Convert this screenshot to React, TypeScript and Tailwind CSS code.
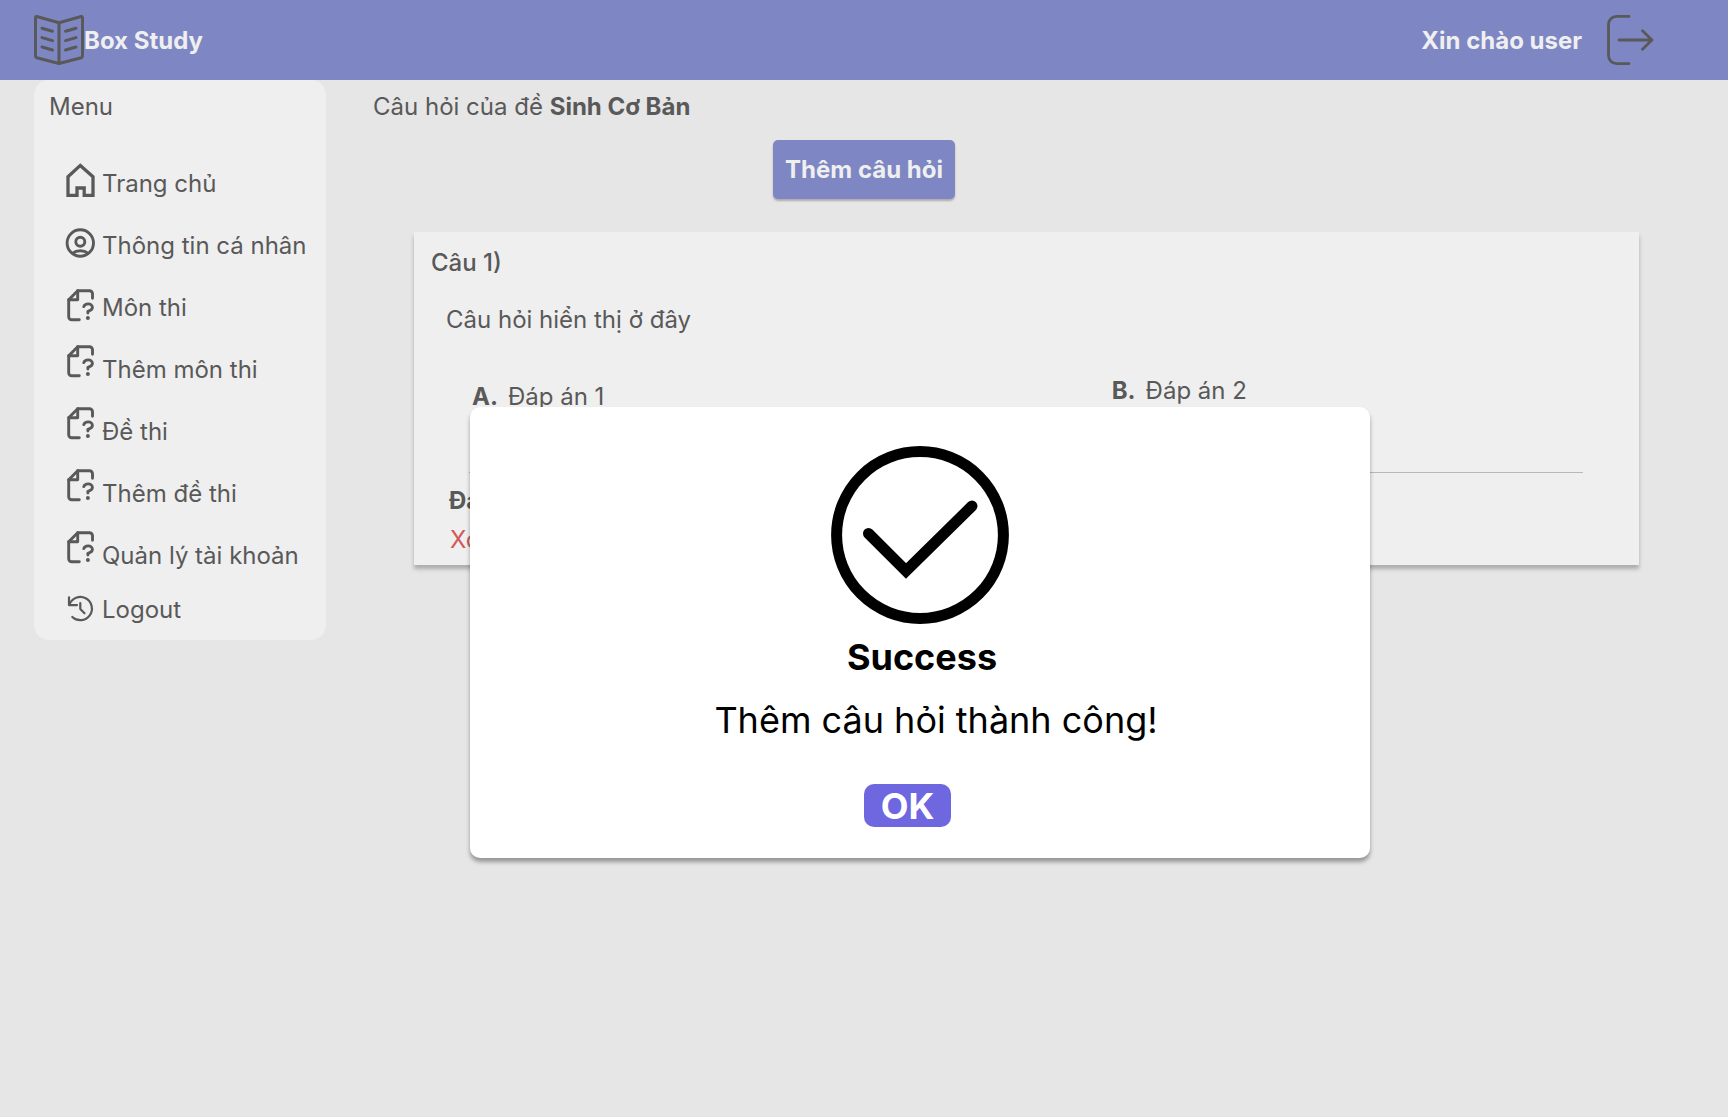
import type { ReactNode } from "react";

type IconProps = { children: ReactNode; width?: number; className?: string };

function MenuIcon({ children, width = 2.9, className = "" }: IconProps) {
  return (
    <svg
      viewBox="0 0 36 36"
      className={`h-9 w-9 ${className}`}
      fill="none"
      stroke="currentColor"
      strokeWidth={width}
      aria-hidden="true"
    >
      {children}
    </svg>
  );
}

const HomeIcon = () => (
  <MenuIcon width={3.3}>
    <path d="M6 14.7 18.3 3.4 31 14.7V33.3H22.2V26H15V33.3H6Z" />
  </MenuIcon>
);

const UserIcon = () => (
  <MenuIcon width={2.9}>
    <circle cx="18.3" cy="18" r="13.2" />
    <circle cx="18.3" cy="16.7" r="4.5" />
    <path d="M10.3 28.3C12.6 26.6 15.3 25.8 18.3 25.8s5.7.8 8 2.5" />
  </MenuIcon>
);

const QuestionFileIcon = () => (
  <MenuIcon>
    <g strokeLinecap="round" strokeLinejoin="round">
      <path d="M17.3 32.8H9.7a3 3 0 0 1-3-3V12.7l9-9h11.8a3 3 0 0 1 3 3v4.6" />
      <path d="M6.7 12.7h9v-9" />
      <path d="M21.8 19.6c.6-1.8 2.3-2.7 4.3-2.7 2.4 0 4.3 1.4 4.3 3.5 0 2.5-2.4 3.1-4.5 3.9V26" />
    </g>
    <circle cx="25.9" cy="31" r="2" fill="currentColor" stroke="none" />
  </MenuIcon>
);

const HistoryIcon = () => (
  <MenuIcon width={2.2}>
    <g strokeLinecap="round" strokeLinejoin="round">
      <path d="M7 6.3v7.8h8" />
      <path d="M7.4 13.6A11.6 11.6 0 1 1 10.3 26" />
      <path d="M18.3 12v6l4.2 4.3" />
    </g>
  </MenuIcon>
);

const items = [
  { label: "Trang chủ", icon: <HomeIcon />, row: "h-[62px]", lift: "pb-1.5" },
  { label: "Thông tin cá nhân", icon: <UserIcon />, row: "h-[62px]", lift: "pb-1" },
  { label: "Môn thi", icon: <QuestionFileIcon />, row: "h-[62px]", lift: "pb-1" },
  { label: "Thêm môn thi", icon: <QuestionFileIcon />, row: "h-[62px]", lift: "pb-4" },
  { label: "Đề thi", icon: <QuestionFileIcon />, row: "h-[62px]", lift: "pb-4" },
  { label: "Thêm đề thi", icon: <QuestionFileIcon />, row: "h-[62px]", lift: "pb-4" },
  { label: "Quản lý tài khoản", icon: <QuestionFileIcon />, row: "h-[62px]", lift: "pb-4" },
  { label: "Logout", icon: <HistoryIcon />, row: "h-[46px]", lift: "" },
];

function Header() {
  return (
    <header className="flex h-20 items-center justify-between bg-[#7e87c3] pr-[73px] pl-[34px] text-[#efefef]">
      <a href="#home" className="flex items-center font-bold">
        <svg viewBox="0 0 50 50" className="h-[50px] w-[50px] text-[#595959]" fill="none" stroke="currentColor" strokeWidth="3" strokeLinecap="round" strokeLinejoin="round" aria-hidden="true">
          <path d="M25 7.8 2.8 1.5Q1.5 1.3 1.5 2.8V41q0 1.3 1.3 1.7L25 48.5l22.2-5.8q1.3-.4 1.3-1.7V2.8q0-1.5-1.3-1.3ZV48.5" />
          <path d="m8 13.2 10.5 3M8 22.6l10.5 3M8 32l10.5 3M42 13.2l-10.5 3M42 22.6l-10.5 3M42 32l-10.5 3" />
        </svg>
        <span>Box Study</span>
      </a>
      <div className="flex items-center gap-[23px]">
        <span className="font-bold">Xin chào user</span>
        <button type="button" aria-label="Đăng xuất" className="text-[#595959]">
          <svg viewBox="0 0 50 50" className="h-[50px] w-[50px]" fill="none" stroke="currentColor" strokeWidth="2.8" strokeLinecap="round" strokeLinejoin="round" aria-hidden="true">
            <path d="M24 1.4H11.5a8 8 0 0 0-8 8v31.2a8 8 0 0 0 8 8H24" />
            <path d="M14 25h33M37.5 15.7 47 25l-9.5 9.3" />
          </svg>
        </button>
      </div>
    </header>
  );
}

function Sidebar() {
  return (
    <aside className="w-[292px] shrink-0 rounded-[15px] bg-[#efefef] pt-3 pb-2">
      <h2 className="pl-[15px]">Menu</h2>
      <nav aria-label="Menu" className="pt-[31px]">
        <ul>
          {items.map((item) => (
            <li key={item.label}>
              <a href="#menu" className={`flex items-center gap-1 pl-7 ${item.row}`}>
                <span className={item.lift}>{item.icon}</span>
                <span>{item.label}</span>
              </a>
            </li>
          ))}
        </ul>
      </nav>
    </aside>
  );
}

function QuestionCard() {
  return (
    <article className="mt-[33px] mr-[89px] ml-[41px] bg-[#efefef] pt-4 pb-[11px] shadow-[0_4px_4px_rgba(0,0,0,0.25)]">
      <h3 className="pl-[17px] font-medium">Câu 1)</h3>
      <p className="pt-7 pl-8">Câu hỏi hiển thị ở đây</p>
      <div className="mr-14 ml-[55px] border-b border-[#b8b8b8] pt-[42px] pb-[61px]">
        <div className="grid h-[35px] grid-cols-[15fr_11fr]">
          <p className="flex gap-[10px] self-end pl-[3px]">
            <b>A.</b>
            <span>Đáp án 1</span>
          </p>
          <p className="flex gap-[10px]">
            <b>B.</b>
            <span>Đáp án 2</span>
          </p>
        </div>
      </div>
      <p className="pt-[13px] pl-[35px] font-bold">Đáp án</p>
      <button type="button" className="mt-[10px] ml-9 block text-[#d05a5a]">Xoá</button>
    </article>
  );
}

function SuccessDialog() {
  return (
    <div className="absolute inset-0 flex items-start justify-center pt-[407px] pl-28">
      <div
        role="dialog"
        aria-modal="true"
        aria-labelledby="dialog-title"
        className="flex w-[900px] max-w-full flex-col items-center rounded-[10px] bg-white pt-[39px] pb-[30px] text-4xl leading-[44px] text-black shadow-[0_4px_4px_rgba(0,0,0,0.35)]"
      >
        <svg viewBox="0 0 178 178" className="h-[178px] w-[178px]" fill="none" stroke="currentColor" strokeWidth="11" aria-hidden="true">
          <circle cx="89" cy="89" r="83.4" />
          <path d="M37.5 87.5 75 125 141 60" strokeLinecap="round" strokeLinejoin="miter" />
        </svg>
        <h2 id="dialog-title" className="pt-[11px] pl-1 font-bold">Success</h2>
        <p className="pt-[19px] pl-8">Thêm câu hỏi thành công!</p>
        <div className="pt-[42px] pr-[25px]">
          <button type="button" className="h-[43px] w-[87px] rounded-[10px] bg-[#6f67e0] font-bold text-white">OK</button>
        </div>
      </div>
    </div>
  );
}

export default function App() {
  return (
    <div className="relative min-h-screen bg-[#e6e6e6] font-['Inter',sans-serif] text-2xl leading-[29px] text-[#595959]">
      <Header />
      <div className="flex items-start gap-[47px] pl-[34px]">
        <Sidebar />
        <main className="min-w-0 flex-1 pt-3">
          <h1>
            Câu hỏi của đề <b>Sinh Cơ Bản</b>
          </h1>
          <div className="flex justify-center pt-[19px] pr-[373px]">
            <button type="button" className="h-[59px] rounded-[5px] bg-[#7e87c3] px-3 font-bold text-[#efefef] shadow-[0_2px_2px_rgba(0,0,0,0.25)]">
              Thêm câu hỏi
            </button>
          </div>
          <QuestionCard />
        </main>
      </div>
      <SuccessDialog />
    </div>
  );
}
